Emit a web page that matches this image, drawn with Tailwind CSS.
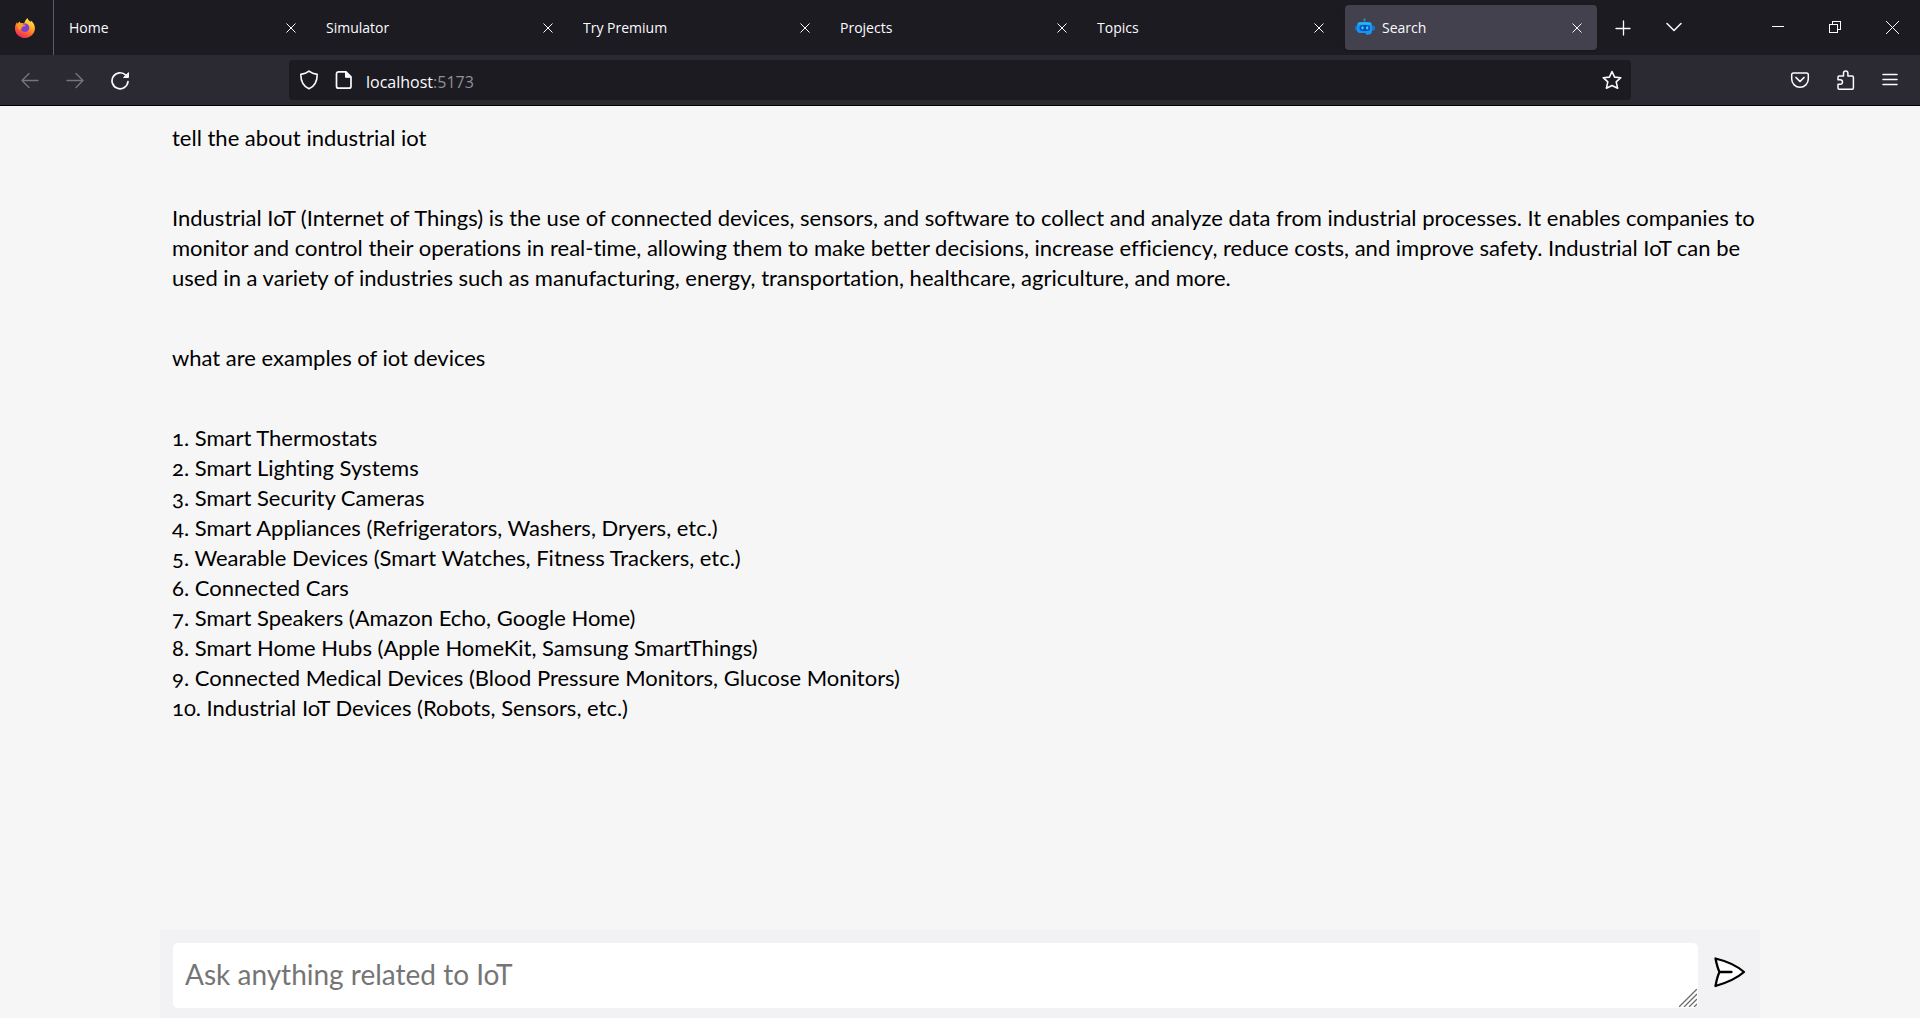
<!DOCTYPE html>
<html lang="en">
<head>
<meta charset="utf-8">
<meta name="viewport" content="width=device-width, initial-scale=1">
<title>Search</title>
<script src="https://cdn.jsdelivr.net/npm/@tailwindcss/browser@4"></script>
</head>
<body class="flex h-screen flex-col overflow-hidden bg-[#f6f6f6] font-['Lato',sans-serif] text-black">

<header class="shrink-0 border-b border-black bg-[#2b2a33] font-['Open_Sans','Noto_Sans',sans-serif] text-[#fbfbfe]">
  <!-- Tab strip -->
  <div class="flex h-[55px] items-center bg-[#1c1b22]">
    <div class="flex h-full w-[54px] shrink-0 items-center justify-center border-r border-[#5b5b66] pr-1">
      <svg class="size-5" viewBox="0 0 20 20" aria-label="Firefox">
        <defs>
          <linearGradient id="flame" x1="0.8" y1="0" x2="0.3" y2="1">
            <stop offset="0" stop-color="#fff44f"/><stop offset=".35" stop-color="#ffb52e"/><stop offset=".65" stop-color="#ff6a2b"/><stop offset="1" stop-color="#f0206a"/>
          </linearGradient>
        </defs>
        <path d="M12.5 0c.3 1.800 1.800 2.600 3.200 4 .2-.4.2-.9.1-1.400 2.500 1.700 4.200 4.700 4.100 8C19.800 16 15.300 20 10 20S0 15.900 0 10.400C0 7.700.8 6 2 4.300c.1.8.3 1.200.6 1.500C3 4.900 3.700 4 4.900 3.500c0 .7.300 1.200.7 1.500 1.200-.2 2.500 0 3.500.6.8-2 1.600-4.100 3.400-5.600z" fill="url(#flame)"/>
        <circle cx="10" cy="9.800" r="4.300" fill="#7b3fd8"/>
        <path d="M2.500 5.800c2.200-.8 4.500-.6 6 .7l2 .4c.3.900-1.700 1.500-2.600 1.700-1.200.4-1.600 1.500-.8 2.300-1.500-.2-2 .4-1.600 1.500C3 11.500 2 8.500 2.500 5.800z" fill="#ff9a26"/>
      </svg>
    </div>
    <nav class="flex min-w-0 flex-1 gap-[5px] pl-[6px] text-sm" aria-label="Tabs">
      <div class="flex h-[45px] w-[252px] items-center pr-4 pl-[9px]"><a href="#" class="flex-1 truncate pt-px">Home</a><button aria-label="Close Home"><svg class="size-[10px]" viewBox="0 0 10 10" fill="none" stroke="currentColor"><path d="M.5.5l9 9M9.500.5l-9 9"/></svg></button></div>
      <div class="flex h-[45px] w-[252px] items-center pr-4 pl-[9px]"><a href="#" class="flex-1 truncate pt-px">Simulator</a><button aria-label="Close Simulator"><svg class="size-[10px]" viewBox="0 0 10 10" fill="none" stroke="currentColor"><path d="M.5.5l9 9M9.500.5l-9 9"/></svg></button></div>
      <div class="flex h-[45px] w-[252px] items-center pr-4 pl-[9px]"><a href="#" class="flex-1 truncate pt-px">Try Premium</a><button aria-label="Close Try Premium"><svg class="size-[10px]" viewBox="0 0 10 10" fill="none" stroke="currentColor"><path d="M.5.5l9 9M9.500.5l-9 9"/></svg></button></div>
      <div class="flex h-[45px] w-[252px] items-center pr-4 pl-[9px]"><a href="#" class="flex-1 truncate pt-px">Projects</a><button aria-label="Close Projects"><svg class="size-[10px]" viewBox="0 0 10 10" fill="none" stroke="currentColor"><path d="M.5.5l9 9M9.500.5l-9 9"/></svg></button></div>
      <div class="flex h-[45px] w-[252px] items-center pr-4 pl-[9px]"><a href="#" class="flex-1 truncate pt-px">Topics</a><button aria-label="Close Topics"><svg class="size-[10px]" viewBox="0 0 10 10" fill="none" stroke="currentColor"><path d="M.5.5l9 9M9.500.5l-9 9"/></svg></button></div>
      <div class="flex h-[45px] w-[252px] items-center gap-[7px] rounded bg-[#42414d] pr-[15px] pl-[10px] shadow">
        <svg class="size-5" viewBox="0 0 20 20" aria-hidden="true">
          <path d="M9.500 1v4" stroke="#1583b5" stroke-width="1.500"/><circle cx="9.500" cy="1.400" r="1.200" fill="#1689bd"/>
          <rect x="0" y="7.500" width="4" height="5" rx="1.500" fill="#1675c9"/><rect x="16" y="7.500" width="4" height="5" rx="1.500" fill="#1675c9"/>
          <path d="M5 4h9a3 3 0 0 1 3 3v6c0 2-1 3.500-3 3.500L11.500 17 10.500 15H5a3 3 0 0 1-3-3V7a3 3 0 0 1 3-3z" fill="#1a94f0"/>
          <path d="M3 6.500C3.500 5 4.500 4.500 6 4.500h7c1.500 0 2.500.5 3 2z" fill="#2eb5ee"/>
          <rect x="4.500" y="7" width="10.500" height="6" rx="3" fill="#0a4fb8"/>
          <ellipse cx="7.500" cy="9.800" rx="1.200" ry="1.600" fill="#26dcf5"/><ellipse cx="12.200" cy="9.800" rx="1.200" ry="1.600" fill="#26dcf5"/>
        </svg>
        <a href="#" aria-current="page" class="flex-1 truncate pt-px">Search</a><button aria-label="Close Search"><svg class="size-[10px]" viewBox="0 0 10 10" fill="none" stroke="currentColor"><path d="M.5.5l9 9M9.500.5l-9 9"/></svg></button>
      </div>
      <div class="flex items-center gap-[35px] pl-[13px]">
        <button aria-label="New tab"><svg class="size-4" viewBox="0 0 16 16" fill="none" stroke="currentColor" stroke-width="1.300" stroke-linecap="round"><path d="M8.500 1v14M1 8.500h14"/></svg></button>
        <button aria-label="List all tabs"><svg class="size-4" viewBox="0 0 16 16" fill="none" stroke="currentColor" stroke-width="1.500" stroke-linecap="round" stroke-linejoin="round"><path d="M1 3.500l7 7 7-7"/></svg></button>
      </div>
    </nav>
    <div class="flex shrink-0 items-center gap-11 pr-[21px]">
      <button aria-label="Minimize"><svg class="size-[13px]" viewBox="0 0 13 13" stroke="currentColor" shape-rendering="crispEdges"><path d="M0 5.500h12"/></svg></button>
      <button aria-label="Restore"><svg class="size-[13px]" viewBox="0 0 13 13" fill="none" stroke="currentColor" shape-rendering="crispEdges"><path d="M.5 3.500h8v8h-8zM3.500 3.500v-3h8v8h-3"/></svg></button>
      <button aria-label="Close window"><svg class="size-[13px]" viewBox="0 0 13 13" fill="none" stroke="currentColor"><path d="M0 0l13 13M13 0L0 13"/></svg></button>
    </div>
  </div>

  <!-- Navigation toolbar -->
  <div class="flex h-[50px] items-center pr-5">
    <div class="flex w-[289px] shrink-0 items-center gap-[25px] pl-5">
      <button aria-label="Back" class="text-[#76757c]"><svg class="size-5" viewBox="0 0 20 20" fill="none" stroke="currentColor" stroke-width="1.400" stroke-linecap="round" stroke-linejoin="round"><path d="M18 10.500H2M9 3.500l-7 7 7 7"/></svg></button>
      <button aria-label="Forward" class="text-[#76757c]"><svg class="size-5" viewBox="0 0 20 20" fill="none" stroke="currentColor" stroke-width="1.400" stroke-linecap="round" stroke-linejoin="round"><path d="M2 10.500h16M11 3.500l7 7-7 7"/></svg></button>
      <button aria-label="Reload"><svg class="size-5" viewBox="0 0 20 20" fill="none" stroke="currentColor" stroke-width="1.700" stroke-linecap="round"><path d="M18 11.500A8 8 0 1 1 15.800 5.200"/><path d="M18.500 3v4.500h-4.500z" fill="currentColor" stroke-width="1" stroke-linejoin="round"/></svg></button>
    </div>
    <div class="flex h-10 min-w-0 flex-1 items-center rounded bg-[#1c1b22] pr-[9px] pl-[10px]">
      <svg class="mr-[15px] size-5 shrink-0" viewBox="0 0 20 20" fill="none" stroke="currentColor" stroke-width="1.600" stroke-linejoin="round" aria-hidden="true"><path d="M10 1.200c2.200 1.800 5 2.800 8.200 3.200 0 7-2.200 11.600-8.200 14.400C4 16 1.800 11.400 1.800 4.400 5 4 7.800 3 10 1.200z"/></svg>
      <svg class="mr-3 size-5 shrink-0" viewBox="0 0 20 20" fill="none" stroke="currentColor" stroke-width="1.700" stroke-linejoin="round" aria-hidden="true"><path d="M4.500 1.800h7.500l5 5v9.400a2 2 0 0 1-2 2H4.500a2 2 0 0 1-2-2V3.800a2 2 0 0 1 2-2z"/><path d="M11.500 2v5.300h5.300z" fill="currentColor" stroke-width="1"/></svg>
      <a href="#" class="flex-1 truncate pt-[3px] text-base">localhost<span class="text-[#8f8f96]">:5173</span></a>
      <button aria-label="Bookmark this page"><svg class="size-5" viewBox="0 0 20 20" fill="none" stroke="currentColor" stroke-width="1.600" stroke-linejoin="round"><path d="M10 1.500l2.600 5.600 6.200.6-4.600 4.200 1.400 6.300L10 15.500l-5.600 2.700 1.400-6.300L1.200 7.700l6.200-.6z"/></svg></button>
    </div>
    <div class="flex shrink-0 items-center gap-[25px] pl-[159px]">
      <button aria-label="Save to Pocket"><svg class="size-5" viewBox="0 0 20 20" fill="none" stroke="currentColor" stroke-width="1.500" stroke-linecap="round" stroke-linejoin="round"><path d="M3.500 3h13A1.800 1.800 0 0 1 18.300 4.800V9A8.300 8.300 0 0 1 1.700 9V4.800A1.800 1.800 0 0 1 3.500 3z"/><path d="M6 7.500l4 4 4-4" stroke-width="1.700"/></svg></button>
      <button aria-label="Extensions"><svg class="size-5" viewBox="0 0 20 20" fill="none" stroke="currentColor" stroke-width="1.500" stroke-linejoin="round"><path d="M8.500 6V3.300a2.200 2.200 0 0 1 4.400 0V6h4.300a1.200 1.200 0 0 1 1.200 1.200v10.800a1.200 1.200 0 0 1-1.200 1.200H4.200A1.200 1.200 0 0 1 3 18V14.300h2.200a2.300 2.300 0 0 0 0-4.600H3V7.200A1.200 1.200 0 0 1 4.200 6z"/></svg></button>
      <button aria-label="Application menu"><svg class="size-5" viewBox="0 0 20 20" fill="none" stroke="currentColor" stroke-width="1.500" stroke-linecap="round"><path d="M3 4.500h14M3 9.500h14M3 14.500h14"/></svg></button>
    </div>
  </div>
</header>

<main class="mx-auto flex min-h-0 w-5/6 flex-1 flex-col [font-variant-ligatures:none]">
  <section class="flex min-h-0 flex-1 flex-col gap-[50px] overflow-hidden pt-[17px] pl-3 text-[22px] leading-[30px]" aria-label="Conversation">
    <p>tell the about industrial iot</p>
    <p>Industrial IoT (Internet of Things) is the use of connected devices, sensors, and software to collect and analyze data from industrial processes. It enables companies to monitor and control their operations in real-time, allowing them to make better decisions, increase efficiency, reduce costs, and improve safety. Industrial IoT can be used in a variety of industries such as manufacturing, energy, transportation, healthcare, agriculture, and more.</p>
    <p>what are examples of iot devices</p>
    <p class="[font-feature-settings:'onum']">1. Smart Thermostats<br>2. Smart Lighting Systems<br>3. Smart Security Cameras<br>4. Smart Appliances (Refrigerators, Washers, Dryers, etc.)<br>5. Wearable Devices (Smart Watches, Fitness Trackers, etc.)<br>6. Connected Cars<br>7. Smart Speakers (Amazon Echo, Google Home)<br>8. Smart Home Hubs (Apple HomeKit, Samsung SmartThings)<br>9. Connected Medical Devices (Blood Pressure Monitors, Glucose Monitors)<br>10. Industrial IoT Devices (Robots, Sensors, etc.)</p>
  </section>

  <form class="flex shrink-0 items-start gap-[15px] bg-[#f2f2f4] pt-[13px] pr-[14px] pb-[10px] pl-[13px]">
    <div class="relative flex-1">
      <textarea rows="1" aria-label="Your question" placeholder="Ask anything related to IoT" class="block h-[65px] w-full resize-none overflow-hidden rounded-[5px] bg-white px-3 py-3 text-[28px] leading-[38px] outline-none placeholder:text-[#757575]"></textarea>
      <svg class="absolute right-px bottom-px size-[18px]" viewBox="0 0 18 18" stroke="#6b6b6b" stroke-width="1.300" aria-hidden="true"><path d="M0 18L18 0M5 18L18 5M10 18l8-8M15 18l3-3"/></svg>
    </div>
    <button aria-label="Send" class="pt-[13px]"><svg class="h-8 w-[33px]" viewBox="0 0 33 32" fill="#fff" stroke="#000" stroke-width="2.300" stroke-linejoin="round" stroke-linecap="round"><path d="M2.500 2.500C13 5 23 9 31 16 23 23 13 27 2.500 30 3.500 24.500 4.500 20 6.500 16 4.500 12 3.500 7.500 2.500 2.500zM6.500 16h12"/></svg></button>
  </form>
</main>
</body>
</html>
